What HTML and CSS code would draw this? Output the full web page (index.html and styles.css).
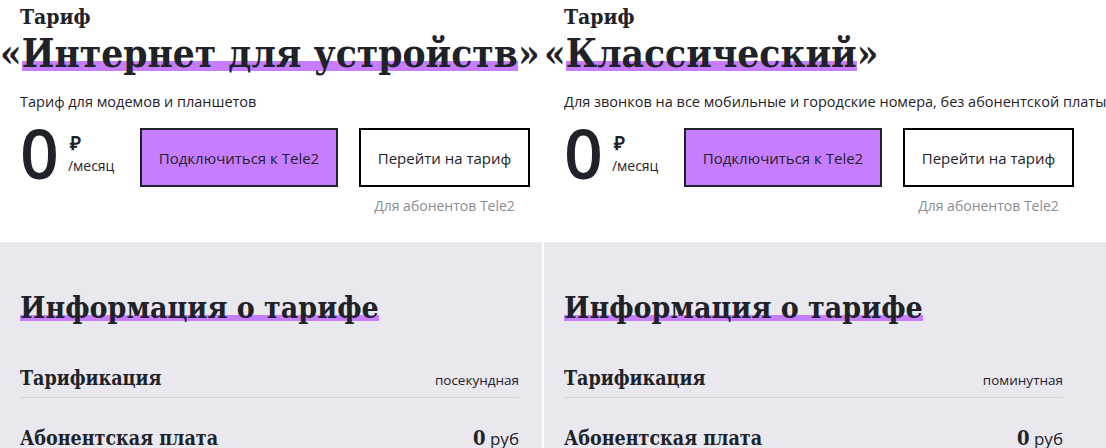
FILE: index.html
```html
<!DOCTYPE html>
<html lang="ru">
<head>
  <meta charset="UTF-8" />
  <meta name="viewport" content="width=device-width, initial-scale=1.0"/>
  <title>Сравнение тарифов Tele2</title>
  <link rel="stylesheet" href="styles.css">
</head>
<body>
  <div class="tariffs">
    <section class="tariff">
      <div class="tariff-head">
        <div class="tariff-label">Тариф</div>
        <h1 class="tariff-name">«<span class="mark">Интернет для устройств</span>»</h1>
        <p class="tariff-desc">Тариф для модемов и планшетов</p>
        <div class="price-row">
          <div class="price">
            <span class="price-value">0</span>
            <span class="price-unit"><b>₽</b><span>/месяц</span></span>
          </div>
          <a class="btn btn-primary" href="#">Подключиться к Tele2</a>
          <div class="btn-col">
            <a class="btn btn-outline" href="#">Перейти на тариф</a>
            <span class="btn-note">Для абонентов Tele2</span>
          </div>
        </div>
      </div>
      <div class="tariff-info">
        <h2 class="info-title"><span class="mark">Информация о тарифе</span></h2>
        <div class="info-row">
          <span class="info-name">Тарификация</span>
          <span class="info-value">посекундная</span>
        </div>
        <div class="info-row no-line">
          <span class="info-name">Абонентская плата</span>
          <span class="info-value money"><b>0</b> руб</span>
        </div>
      </div>
    </section>

    <section class="tariff">
      <div class="tariff-head">
        <div class="tariff-label">Тариф</div>
        <h1 class="tariff-name">«<span class="mark">Классический</span>»</h1>
        <p class="tariff-desc">Для звонков на все мобильные и городские номера, без абонентской платы</p>
        <div class="price-row">
          <div class="price">
            <span class="price-value">0</span>
            <span class="price-unit"><b>₽</b><span>/месяц</span></span>
          </div>
          <a class="btn btn-primary" href="#">Подключиться к Tele2</a>
          <div class="btn-col">
            <a class="btn btn-outline" href="#">Перейти на тариф</a>
            <span class="btn-note">Для абонентов Tele2</span>
          </div>
        </div>
      </div>
      <div class="tariff-info">
        <h2 class="info-title"><span class="mark">Информация о тарифе</span></h2>
        <div class="info-row">
          <span class="info-name">Тарификация</span>
          <span class="info-value">поминутная</span>
        </div>
        <div class="info-row no-line">
          <span class="info-name">Абонентская плата</span>
          <span class="info-value money"><b>0</b> руб</span>
        </div>
      </div>
    </section>
  </div>
</body>
</html>
```

FILE: styles.css
```css
body {
  margin: 0;
  font-family: 'Open Sans', sans-serif;
  color: #1f2229;
  background: #fff;
  overflow: hidden;
}

.tariffs {
  display: grid;
  grid-template-columns: 542px 562px;
  column-gap: 2px;
  background: #fff;
}

.tariff {
  display: flex;
  flex-direction: column;
  min-width: 0;
}

.tariff-head {
  background: #fff;
  padding: 4px 0 0 20px;
  height: 238px;
  white-space: nowrap;
}

.tariff-label {
  font-family: 'DejaVu Serif', serif;
  font-weight: bold;
  font-stretch: condensed;
  font-size: 21px;
  line-height: 26px;
}

.tariff-name {
  margin: 0 0 0 -20px;
  font-family: 'DejaVu Serif', serif;
  font-weight: bold;
  font-stretch: condensed;
  font-size: 38.5px;
  line-height: 48px;
}

.mark {
  background: linear-gradient(to top, transparent 0, transparent 10%, #c77dff 10%, #c77dff 33%, transparent 33%);
}

.tariff-desc {
  margin: 14px 0 0;
  font-size: 14.5px;
  line-height: 20px;
}

.price-row {
  display: flex;
  align-items: flex-start;
  margin-top: 16px;
}

.price {
  display: flex;
  align-items: flex-start;
  width: 120px;
}

.price-value {
  font-size: 68px;
  font-weight: 600;
  line-height: 70px;
  margin-top: -10px;
}

.price-unit {
  display: flex;
  flex-direction: column;
  margin: 5px 0 0 9px;
  font-size: 14px;
  line-height: 17px;
}

.price-unit b {
  padding-left: 2px;
  font-size: 19px;
  line-height: 20px;
}

.price-unit span {
  margin-top: 4px;
}

.btn {
  display: flex;
  align-items: center;
  justify-content: center;
  box-sizing: border-box;
  height: 59px;
  border: 2px solid #1f2229;
  color: #1f2229;
  text-decoration: none;
  font-size: 15px;
}

.btn-primary {
  width: 198px;
  background: #c77dff;
}

.btn-col {
  display: flex;
  flex-direction: column;
  align-items: center;
  margin-left: 21px;
}

.btn-outline {
  width: 171px;
  background: #fff;
  border-color: #000;
}

.btn-note {
  margin-top: 9px;
  font-size: 14px;
  color: #8b8b90;
}

.tariff-info {
  flex: 1;
  background: #e9e8ee;
  padding: 46px 24px 0 20px;
  height: 204px;
}

.info-title {
  margin: 0 0 39px;
  font-family: 'DejaVu Serif', serif;
  font-weight: bold;
  font-stretch: condensed;
  font-size: 30px;
  line-height: 40px;
}

.info-title .mark {
  background: linear-gradient(to top, transparent 0, transparent 12%, #c77dff 12%, #c77dff 28%, transparent 28%);
}

.info-row {
  display: flex;
  justify-content: space-between;
  align-items: baseline;
  width: 499px;
  border-bottom: 1px solid #d6d5dc;
  padding-bottom: 7px;
  margin-bottom: 28px;
}

.info-row.no-line {
  border-bottom: none;
}

.info-name {
  font-family: 'DejaVu Serif', serif;
  font-weight: bold;
  font-stretch: condensed;
  font-size: 19.5px;
}

.info-value {
  font-size: 13.5px;
}

.info-value.money {
  font-size: 17px;
}

.info-value b {
  font-family: 'DejaVu Serif', serif;
  font-stretch: condensed;
  font-size: 20px;
}
```
